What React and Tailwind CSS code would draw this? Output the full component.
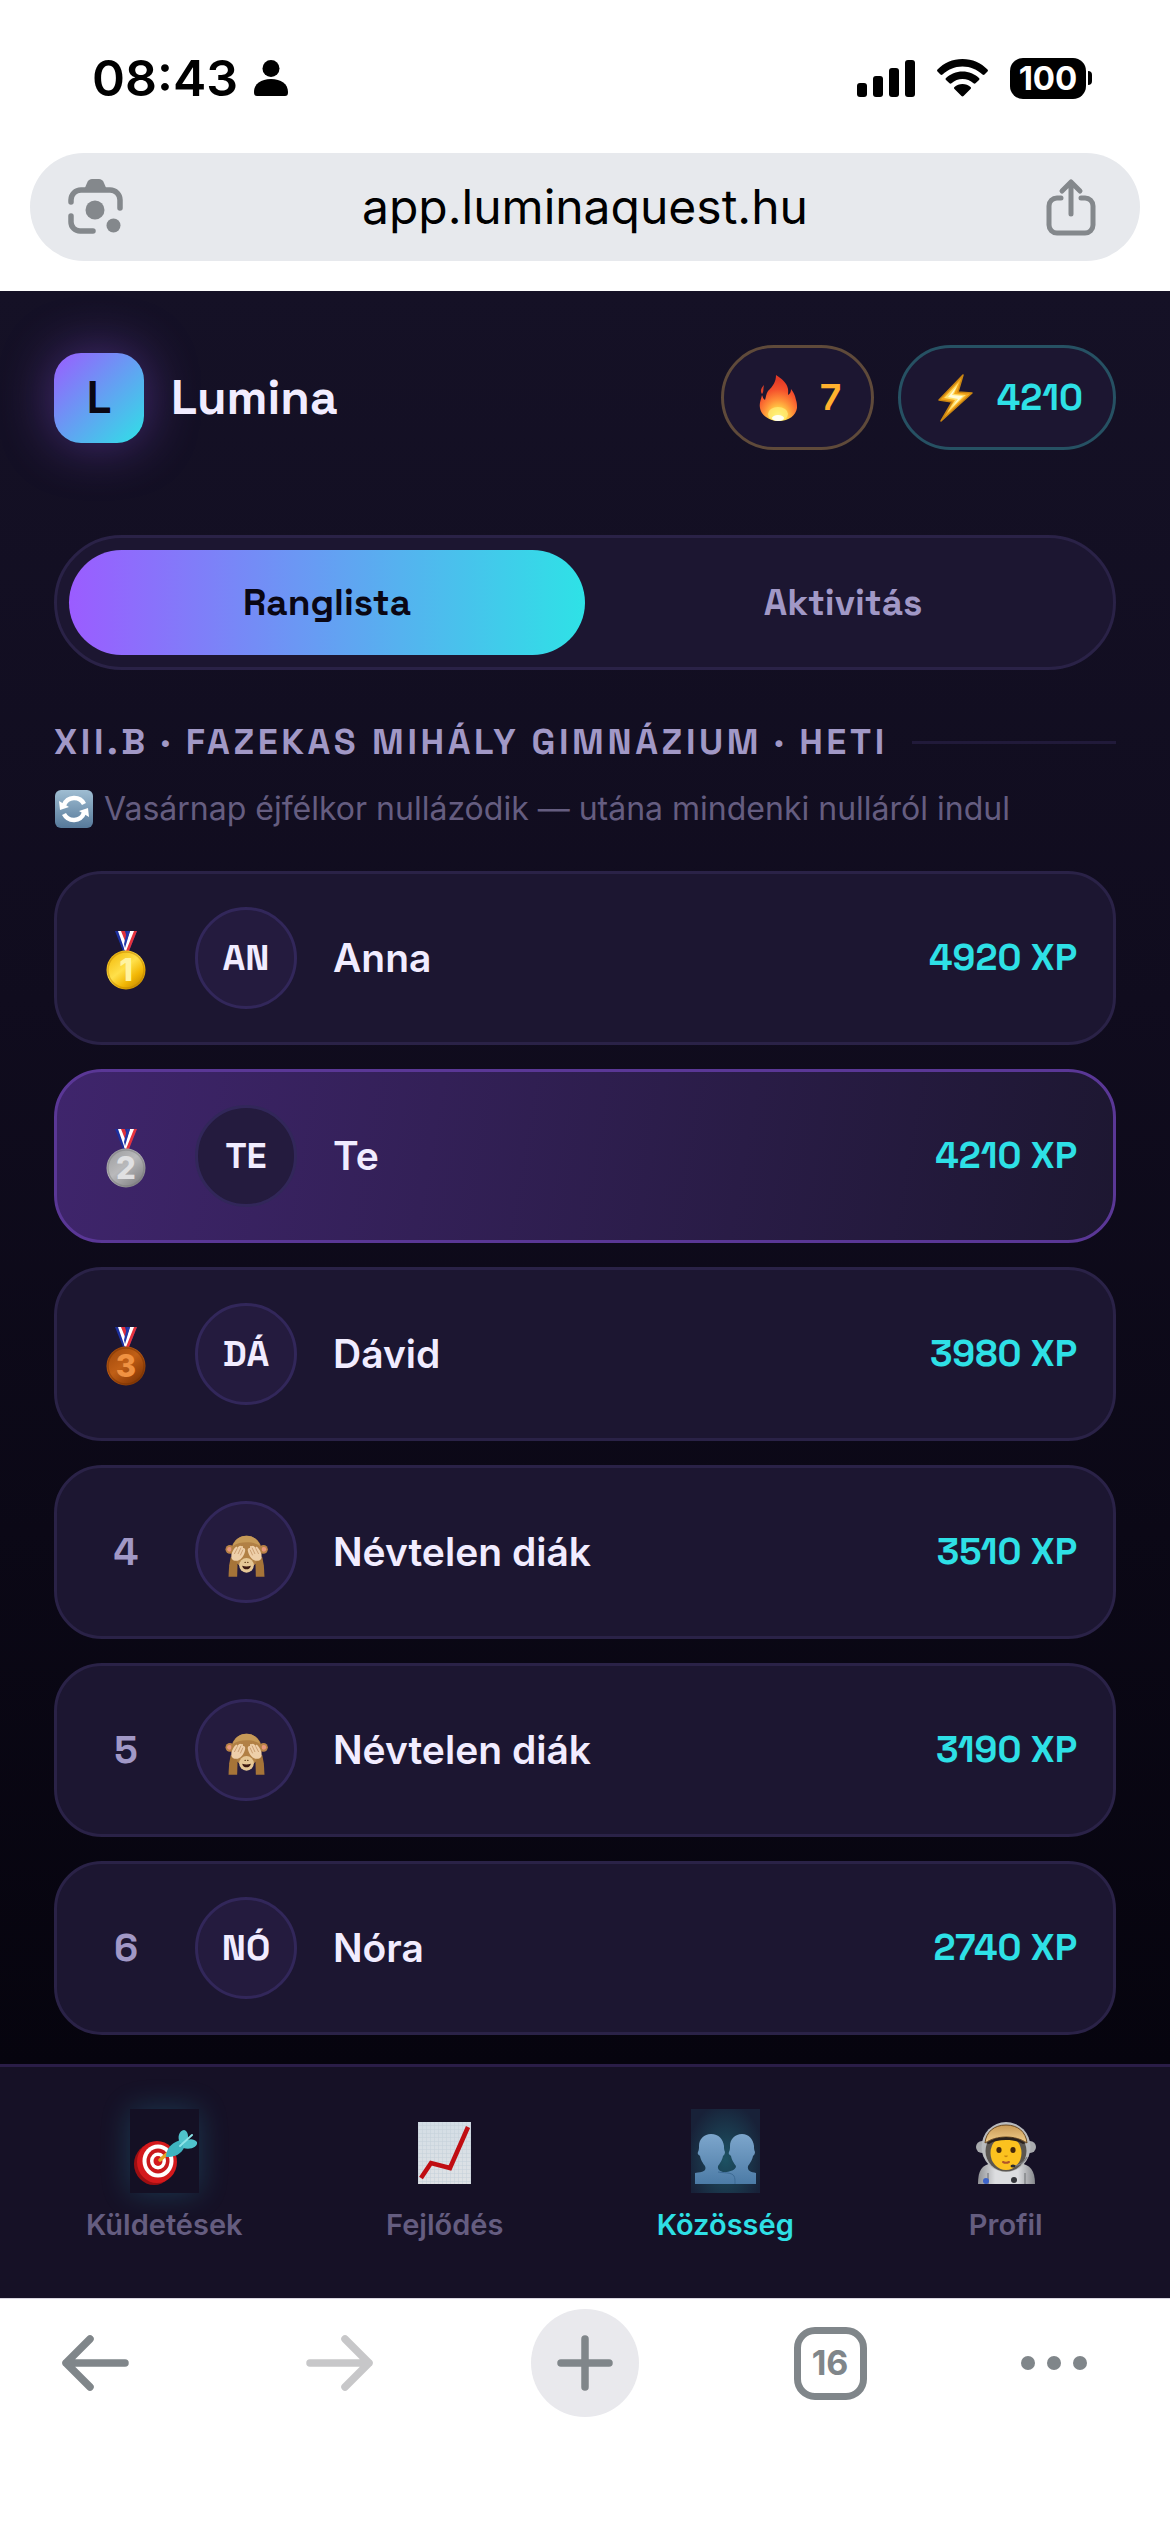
import React from 'react';
import { clsx } from 'clsx';

const players = [
  { rank: 1, initials: 'AN', name: 'Anna', xp: 4920 },
  { rank: 2, initials: 'TE', name: 'Te', xp: 4210, me: true },
  { rank: 3, initials: 'DÁ', name: 'Dávid', xp: 3980 },
  { rank: 4, name: 'Névtelen diák', xp: 3510 },
  { rank: 5, name: 'Névtelen diák', xp: 3190 },
  { rank: 6, initials: 'NÓ', name: 'Nóra', xp: 2740 },
];

const medals = {
  1: { light: '#ffe04a', mid: '#f2b705', dark: '#b97f00', digit: '#fff3a0' },
  2: { light: '#b9b9bb', mid: '#9c9c9e', dark: '#77777a', digit: '#e0e0e2' },
  3: { light: '#c05f16', mid: '#a0480b', dark: '#743003', digit: '#f09242' },
};

function Flame() {
  return (
    <svg width="48" height="48" viewBox="0 0 48 48" aria-hidden="true">
      <defs>
        <radialGradient id="flame" cx="0.5" cy="0.95" r="0.85">
          <stop offset="0" stopColor="#fffbd0" />
          <stop offset="0.2" stopColor="#ffe14a" />
          <stop offset="0.48" stopColor="#ff9038" />
          <stop offset="0.75" stopColor="#f5512c" />
          <stop offset="1" stopColor="#e33a26" />
        </radialGradient>
      </defs>
      <path d="M22 1c6 4 11 8 12 14 .4 3 0 5 0 6 2-1 3-3 3-6 3 4 4 6 5 11 1 3 1 5 1 8-1 7-8 13-18 13S7 41 6 34c-1-5 1-8 2-13 1 2 1 4 3 5 1-3 1-6 3-9 5-5 8-9 8-16z" fill="url(#flame)" />
      <path d="M10 11c-3 3-4 6-2 9 2-2 1-5 2-9z" fill="#d9412a" />
      <ellipse cx="24" cy="40" rx="10" ry="7" fill="#ffef7a" opacity="0.7" />
      <ellipse cx="24" cy="44" rx="6" ry="3" fill="#fffef0" />
    </svg>
  );
}

function Bolt() {
  return (
    <svg width="48" height="48" viewBox="0 0 48 48" aria-hidden="true">
      <path d="M32 1 8 26l13 2L10 47l31-28-14-1z" fill="#f3a51b" stroke="#c98512" strokeWidth="1.5" strokeLinejoin="round" />
      <path d="M28 8 13 24l11 2-8 13 19-18-12-1z" fill="#ffe06a" />
      <path d="m26 12-9 11 10 2-6 8 11-11-11-1z" fill="#fffbd8" />
    </svg>
  );
}

function Medal({ rank }) {
  const c = medals[rank];
  return (
    <svg width="40" height="64" viewBox="0 -4 40 64" role="img" aria-label={rank + '. hely'}>
      <defs>
        <linearGradient id={'medal' + rank} x1="0.1" y1="0" x2="0.9" y2="1">
          <stop offset="0" stopColor={c.mid} />
          <stop offset="0.45" stopColor={c.light} />
          <stop offset="0.7" stopColor={c.mid} />
          <stop offset="1" stopColor={c.dark} />
        </linearGradient>
      </defs>
      <path d="M9 1h22l-8 20h-6z" fill="#1c2f9e" />
      <path d="M12 1h5l5 16-2 4h-1z" fill="#fff" />
      <path d="M15 1h4l3 11-1 4z" fill="#e0303a" />
      <path d="M31 1h-5l-7 20h4z" fill="#e5333d" />
      <path d="M28 1h-4l-6 18 2 2z" fill="#fff" />
      <path d="M24 1h-3l-3 13 1 4z" fill="#2438a8" />
      <circle cx="20" cy="40" r="19.5" fill={'url(#medal' + rank + ')'} />
      <circle cx="20" cy="40" r="18" fill="none" stroke={c.dark} strokeOpacity="0.45" strokeWidth="1.5" />
      <text x="20" y="51" textAnchor="middle" fontSize="31" fontWeight="800" fontFamily="Inter, sans-serif" fill={c.digit}>
        {rank}
      </text>
    </svg>
  );
}

function Monkey() {
  return (
    <svg width="43" height="50" viewBox="27 -9 128 150" role="img" aria-label="Névtelen">
      <circle cx="41" cy="58" r="13" fill="#b98246" />
      <circle cx="142" cy="58" r="13" fill="#b98246" />
      <circle cx="40" cy="58" r="7" fill="#e8967c" />
      <circle cx="143" cy="58" r="7" fill="#e8967c" />
      <ellipse cx="91" cy="64" rx="46" ry="47" fill="#b18045" />
      <path d="M50 48c6-22 24-31 41-31s35 9 41 31c-12-8-26-11-41-11s-29 3-41 11z" fill="#c69a58" />
      <ellipse cx="91" cy="106" rx="22" ry="22" fill="#e6c795" />
      <path d="M44 80c12 6 20 14 20 26l-1 34H37l2-34z" fill="#a67438" />
      <path d="M138 80c-12 6-20 14-20 26l1 34h26l-2-34z" fill="#a67438" />
      <path d="M46 84c-2-10 4-24 12-32 4-3 6-1 5 3 4-7 10-10 12-6 5-3 7 1 5 5 5-1 8 3 7 8-2 12-10 26-22 30-8 2-17-1-19-8z" fill="#eecfa9" />
      <path d="M136 84c2-10-4-24-12-32-4-3-6-1-5 3-4-7-10-10-12-6-5-3-7 1-5 5-5-1-8 3-7 8 2 12 10 26 22 30 8 2 17-1 19-8z" fill="#eecfa9" />
      <g stroke="#c39468" strokeWidth="2.5" fill="none" strokeLinecap="round">
        <path d="m63 56-8 15M74 54l-8 17M80 60l-7 15" />
        <path d="m119 56 8 15M108 54l8 17M102 60l7 15" />
      </g>
      <ellipse cx="87" cy="97" rx="2.5" ry="2" fill="#5c3716" />
      <ellipse cx="95" cy="97" rx="2.5" ry="2" fill="#5c3716" />
      <path d="M78 107c8 3 18 3 26 0-1 7-7 11-13 11s-12-4-13-11z" fill="#3c1810" />
    </svg>
  );
}

function Refresh() {
  return (
    <svg width="40" height="40" viewBox="0 0 40 40" className="shrink-0" aria-hidden="true">
      <defs>
        <linearGradient id="refresh" x1="0" y1="0" x2="0" y2="1">
          <stop offset="0" stopColor="#9fbdd2" />
          <stop offset="1" stopColor="#56799a" />
        </linearGradient>
      </defs>
      <rect x="1" y="1" width="38" height="38" rx="6" fill="url(#refresh)" />
      <path d="M10 16a11 11 0 0 1 20-1M30 24a11 11 0 0 1-20 1" fill="none" stroke="#fff" strokeWidth="4.5" />
      <path d="M5 12l1 9 9-3zM35 28l-1-9-9 3z" fill="#fff" />
    </svg>
  );
}

function Target() {
  return (
    <svg width="69" height="84" viewBox="0 0 69 84" aria-hidden="true">
      <ellipse cx="24" cy="55" rx="20" ry="21" fill="#9e0f12" />
      <ellipse cx="27" cy="53" rx="20" ry="21" fill="#d4191c" />
      <ellipse cx="28" cy="52" rx="15.5" ry="16.5" fill="#fff" />
      <ellipse cx="28" cy="52" rx="11.5" ry="12.5" fill="#c9181b" />
      <ellipse cx="28" cy="52" rx="8" ry="8.5" fill="#fff" />
      <ellipse cx="28" cy="52" rx="4.5" ry="5" fill="#d4191c" />
      <path d="m30 51 9-8" stroke="#e5a323" strokeWidth="3.5" strokeLinecap="round" />
      <path d="M36 48c0-10 8-16 16-17l3 4c-1 8-9 14-19 13z" fill="#3fb3bf" />
      <path d="M50 34c-3-6-1-12 4-13 4 1 5 6 3 13zM53 36c4-7 10-7 14-3 1 5-6 8-14 6z" fill="#4fc3cc" />
      <path d="m50 37 12-11" stroke="#8ce4e8" strokeWidth="2" strokeLinecap="round" />
    </svg>
  );
}

function Chart() {
  return (
    <svg width="69" height="84" viewBox="0 0 69 84" aria-hidden="true">
      <defs>
        <linearGradient id="paper" x1="0" y1="0" x2="0" y2="1">
          <stop offset="0" stopColor="#d3dde5" />
          <stop offset="1" stopColor="#dfe2e5" />
        </linearGradient>
        <pattern id="grid" width="4" height="4" patternUnits="userSpaceOnUse">
          <path d="M0 0H4M0 0V4" stroke="#c4d0d9" strokeWidth="1" />
        </pattern>
      </defs>
      <rect x="8" y="13" width="53" height="62" fill="url(#paper)" />
      <rect x="8" y="13" width="53" height="62" fill="url(#grid)" />
      <path d="m11 69 10-15 19 5 18-41" fill="none" stroke="#c00d12" strokeWidth="4.5" />
    </svg>
  );
}

function People() {
  return (
    <svg width="69" height="84" viewBox="0 0 69 84" aria-hidden="true">
      <defs>
        <linearGradient id="people" x1="0" y1="0" x2="0" y2="1">
          <stop offset="0" stopColor="#7da6cc" />
          <stop offset="1" stopColor="#4c7ba6" />
        </linearGradient>
      </defs>
      <path d="M51 25c7 0 11 5 12 12 0 2 0 4 1 6 0 2-1 3-2 4-1 5-3 7-5 10-1 5 3 6 8 7v11H27V64c10-1 18-2 18-7-2-3-4-5-5-10-1-1-3-2-2-4 1-2 1-4 1-6 0-7 5-12 12-12z" fill="url(#people)" />
      <path d="M20 25c8 0 12 5 13 12 0 2 0 4 1 6 0 2-1 3-2 4-1 5-3 7-5 10-1 5 4 6 11 7 4 1 5 4 5 11H4V64c8-1 12-2 10-7-2-3-4-5-5-10-1-1-3-2-2-4 1-2 1-4 1-6 0-7 5-12 12-12z" fill="url(#people)" />
      <path d="M27 63c4 1 14 0 16 4 1 2 1 4 1 8" fill="none" stroke="#3d6a94" strokeWidth="1" />
    </svg>
  );
}

function Astronaut() {
  return (
    <svg width="69" height="84" viewBox="0 0 69 84" aria-hidden="true">
      <defs>
        <linearGradient id="suit" x1="0" y1="0" x2="1" y2="0">
          <stop offset="0" stopColor="#8f9194" />
          <stop offset="0.3" stopColor="#dcdde0" />
          <stop offset="0.7" stopColor="#dcdde0" />
          <stop offset="1" stopColor="#86888c" />
        </linearGradient>
        <linearGradient id="visor" x1="0" y1="0" x2="0" y2="1">
          <stop offset="0" stopColor="#c99a55" />
          <stop offset="1" stopColor="#f0cd8c" />
        </linearGradient>
      </defs>
      <path d="M7 75c0-14 4-19 14-21h28c10 2 15 7 15 21z" fill="url(#suit)" />
      <path d="M17 75V64M54 75V64" stroke="#85878b" strokeWidth="1.5" />
      <circle cx="11" cy="38" r="6" fill="#a9abae" />
      <circle cx="59" cy="38" r="6" fill="#a9abae" />
      <ellipse cx="35" cy="38" rx="24.5" ry="25" fill="#b9bbbd" />
      <ellipse cx="35" cy="42" rx="20.5" ry="20.5" fill="#5b5650" />
      <ellipse cx="35" cy="44" rx="15.5" ry="17" fill="#fcc21f" />
      <path d="M14 34c1-11 9-18 21-18s20 7 21 18c-6-4-13-6-21-6s-15 2-21 6z" fill="url(#visor)" stroke="#6d4b22" strokeWidth="1" />
      <path d="M15 34c6-4 13-6 20-6s14 2 20 6l-3 1c-5-3-10-4-17-4s-12 1-17 4z" fill="#2a211d" />
      <ellipse cx="28" cy="41" rx="2.6" ry="3" fill="#45290c" />
      <ellipse cx="42" cy="41" rx="2.6" ry="3" fill="#45290c" />
      <path d="M34 47c1 1 1 1 2 0" stroke="#c9860f" strokeWidth="1.5" fill="none" strokeLinecap="round" />
      <path d="M32 53c2 1 4 1 6 0" stroke="#b0562a" strokeWidth="2" fill="none" strokeLinecap="round" />
      <path d="M56 48c-3 6-7 8-13 9" stroke="#7c7d81" strokeWidth="1.5" fill="none" />
      <ellipse cx="42" cy="57" rx="2.5" ry="1.5" fill="#2c2c30" />
      <circle cx="43" cy="71" r="3" fill="#34353a" />
      <circle cx="15" cy="72" r="3" fill="#3c63c9" />
    </svg>
  );
}

function StatusBar() {
  return (
    <div className="flex h-[60px] items-center justify-between pr-[78px] pl-[92px]">
      <div className="flex items-center gap-4">
        <span className="text-[50px] leading-[60px] font-semibold">08:43</span>
        <svg width="34" height="36" viewBox="0 0 34 36" aria-hidden="true">
          <circle cx="17" cy="8.5" r="8.5" />
          <path d="M0 32c0-8 7-13 17-13s17 5 17 13c0 3-1 4-3 4H3c-2 0-3-1-3-4z" />
        </svg>
      </div>
      <div className="flex items-center gap-[22px]">
        <svg width="58" height="38" viewBox="0 0 58 38" aria-hidden="true">
          <rect x="0" y="24" width="10" height="14" rx="3" />
          <rect x="16" y="17" width="10" height="21" rx="3" />
          <rect x="32" y="9" width="10" height="29" rx="3" />
          <rect x="48" y="1" width="10" height="37" rx="3" />
        </svg>
        <svg width="51" height="38" viewBox="0 0 51 38" aria-hidden="true">
          <path d="M25.5 0C35.5 0 44 4 50.5 10.5c.6.6.6 1.4 0 2l-3 3c-.6.6-1.3.6-2 0C40 10.5 33.5 7.5 25.5 7.5S11 10.5 5.5 15.5c-.7.6-1.4.6-2 0l-3-3c-.6-.6-.6-1.4 0-2C7 4 15.5 0 25.5 0z" />
          <path d="M25.5 12.5c6.5 0 12 2.5 16.5 6.5.6.6.6 1.4 0 2l-3.5 3.3c-.6.6-1.3.6-2 0-3-2.8-7-4.3-11-4.3s-8 1.5-11 4.3c-.7.6-1.4.6-2 0L9 21c-.6-.6-.6-1.4 0-2 4.5-4 10-6.5 16.5-6.5z" />
          <path d="M25.5 25c3 0 6 1.2 8 3 .7.6.7 1.3 0 2l-7 7c-.6.6-1.4.6-2 0l-7-7c-.7-.7-.7-1.4 0-2 2-1.8 5-3 8-3z" />
        </svg>
        <div className="flex items-center gap-0.5">
          <span className="flex h-[41px] w-[76px] items-center justify-center rounded-[13px] bg-black text-[33px] leading-none font-bold text-white">
            100
          </span>
          <span className="h-3.5 w-1 rounded-r-full bg-black" />
        </div>
      </div>
    </div>
  );
}

function AddressBar() {
  return (
    <div className="mx-[30px] mt-[45px] flex h-[108px] items-center justify-between rounded-full bg-[#e7e9ed] pr-[44px] pl-[38px] text-[#84888c]">
      <button type="button" aria-label="Lens">
        <svg width="56" height="58" viewBox="0 0 56 58" fill="none" stroke="currentColor" strokeWidth="5.5" strokeLinecap="round">
          <path d="M3 24v-2a10 10 0 0 1 10-10h29a10 10 0 0 1 10 10v8" />
          <path d="M3 38v6a9 9 0 0 0 9 9h13" />
          <path d="M16 12l3-7c1-3 3-4 5-4h7c2 0 4 1 5 4l3 7z" fill="currentColor" stroke="none" />
          <circle cx="27" cy="32" r="9.5" fill="currentColor" stroke="none" />
          <circle cx="45.5" cy="47.5" r="7" fill="currentColor" stroke="none" />
        </svg>
      </button>
      <input
        type="text"
        aria-label="Cím"
        defaultValue="app.luminaquest.hu"
        className="min-w-0 flex-1 bg-transparent text-center text-[48px] leading-[60px] text-black outline-none"
      />
      <button type="button" aria-label="Megosztás">
        <svg width="50" height="58" viewBox="0 0 50 58" fill="none" stroke="currentColor" strokeWidth="5" strokeLinecap="round" strokeLinejoin="round">
          <path d="M15 20h-4a8 8 0 0 0-8 8v19a8 8 0 0 0 8 8h28a8 8 0 0 0 8-8V28a8 8 0 0 0-8-8h-4" />
          <path d="M25 36V4M16 13l9-9 9 9" />
        </svg>
      </button>
    </div>
  );
}

function AppHeader() {
  return (
    <header className="flex items-center justify-between">
      <div className="flex items-center gap-[27px]">
        <div className="flex size-[90px] items-center justify-center rounded-[27px] bg-linear-135/srgb from-[#9b5cff] to-[#2ee2e6] text-[45px] leading-none font-bold text-[#0a0714] shadow-[0_0_54px_rgba(155,92,255,0.4)]">
          L
        </div>
        <h1 className="text-[48px] leading-[60px] font-bold text-[#f1ecff]">Lumina</h1>
      </div>
      <div className="flex gap-6 text-[37px] leading-[48px] font-bold">
        <div className="flex h-[105px] items-center gap-[18px] rounded-full border-3 border-[#5f4a3a] bg-[#1c1631] px-[30px] text-[#ffb12e]">
          <Flame />
          <span>7</span>
        </div>
        <div className="flex h-[105px] items-center gap-[18px] rounded-full border-3 border-[#265163] bg-[#1c1631] px-[30px] text-[#2ee0e6]">
          <Bolt />
          <span>4210</span>
        </div>
      </div>
    </header>
  );
}

function PlayerRow({ player }) {
  return (
    <li
      className={clsx(
        'flex h-[174px] items-center gap-9 rounded-[48px] border-3 px-9',
        player.me
          ? 'border-[#5a3796] bg-linear-100/srgb from-[#3f256c] to-[#1d1731]'
          : 'border-[#2a2247] bg-[#1c1631]'
      )}
    >
      <span className="flex w-[66px] justify-center text-[39px] leading-[48px] font-bold text-[#a198c6]">
        {player.rank <= 3 ? <Medal rank={player.rank} /> : player.rank}
      </span>
      <span className="flex size-[102px] items-center justify-center rounded-full border-3 border-[#32275a] bg-[#241b3e] text-[36px] leading-[48px] font-bold text-[#f1ecff]">
        {player.initials || <Monkey />}
      </span>
      <span className="flex-1 font-['Inter',sans-serif] text-[39px] leading-[48px] font-semibold text-[#f1ecff]">
        {player.name}
      </span>
      <span className="text-[37px] leading-[48px] font-bold text-[#2ee0e6]">{player.xp} XP</span>
    </li>
  );
}

function BottomNav() {
  const item = 'flex flex-col items-center gap-3 text-[29px] leading-10 font-semibold';
  return (
    <nav className="grid grid-cols-4 border-t-3 border-[#2a1d47] bg-[#161126] px-6 pt-[42px] pb-[53px] font-['Inter',sans-serif]">
      <a href="#kuldetesek" className={clsx(item, 'text-[#655d80]')}>
        <span className="bg-[#141024] shadow-[0_0_30px_rgba(46,200,230,0.22)]">
          <Target />
        </span>
        Küldetések
      </a>
      <a href="#fejlodes" className={clsx(item, 'text-[#655d80]')}>
        <Chart />
        Fejlődés
      </a>
      <a href="#kozosseg" aria-current="page" className={clsx(item, 'text-[#2ee0e6]')}>
        <span className="bg-radial-[at_50%_60%] from-[#1d5263] to-[#182138] to-80%">
          <People />
        </span>
        Közösség
      </a>
      <a href="#profil" className={clsx(item, 'text-[#655d80]')}>
        <Astronaut />
        Profil
      </a>
    </nav>
  );
}

function BrowserToolbar() {
  const button = 'flex h-[108px] w-[108px] items-center justify-center';
  return (
    <div className="flex justify-between border-t border-[#d9d6e0] bg-white pt-2.5 pr-[83px] pb-[115px] pl-[41px] text-[#80868a]">
      <button type="button" aria-label="Vissza" className={button}>
        <svg width="68" height="56" viewBox="0 0 68 56" fill="none" stroke="currentColor" strokeWidth="7.5" strokeLinecap="round" strokeLinejoin="round">
          <path d="M64 28H5M29 4 5 28l24 24" />
        </svg>
      </button>
      <button type="button" aria-label="Előre" className={clsx(button, 'text-[#c7c7c9]')}>
        <svg width="68" height="56" viewBox="0 0 68 56" fill="none" stroke="currentColor" strokeWidth="7.5" strokeLinecap="round" strokeLinejoin="round">
          <path d="M4 28h59M39 4l24 24-24 24" />
        </svg>
      </button>
      <button type="button" aria-label="Új lap" className={clsx(button, 'rounded-full bg-[#e9e9ed]')}>
        <svg width="56" height="56" viewBox="0 0 56 56" fill="none" stroke="currentColor" strokeWidth="7.5" strokeLinecap="round">
          <path d="M28 4v48M4 28h48" />
        </svg>
      </button>
      <button type="button" aria-label="Lapok" className={button}>
        <span className="flex size-[73px] items-center justify-center rounded-[21px] border-7 border-[#80868a] text-[34px] leading-none font-bold">
          16
        </span>
      </button>
      <button type="button" aria-label="Továbbiak" className="flex h-[108px] w-[66px] items-center justify-between">
        <span className="size-3.5 rounded-full bg-[#80868a]" />
        <span className="size-3.5 rounded-full bg-[#80868a]" />
        <span className="size-3.5 rounded-full bg-[#80868a]" />
      </button>
    </div>
  );
}

export default function App() {
  return (
    <div className="flex min-h-screen flex-col bg-white font-['Inter',sans-serif] text-black">
      <div className="pt-12 pb-[30px]">
        <StatusBar />
        <AddressBar />
      </div>

      <main className="flex-1 bg-linear-to-b/srgb from-[#151126] via-[#100c1e] via-40% to-[#06040e] px-[54px] pt-[54px] pb-[29px] font-['Space_Grotesk','Inter',sans-serif]">
        <AppHeader />

        <div role="tablist" className="mt-[85px] flex rounded-full border-3 border-[#2a2247] bg-[#1c1631] p-3 text-[37px] leading-[48px]">
          <button type="button" role="tab" aria-selected="true" className="h-[105px] flex-1 rounded-full bg-linear-to-r/srgb from-[#9b5cff] to-[#2ee2e6] font-semibold text-[#0a0714]">
            Ranglista
          </button>
          <button type="button" role="tab" aria-selected="false" className="h-[105px] flex-1 rounded-full font-semibold text-[#a198c6]">
            Aktivitás
          </button>
        </div>

        <h2 className="mt-[48px] flex items-center gap-6 text-[36px] leading-[48px] font-semibold tracking-widest text-[#a198c6] uppercase">
          XII.B · Fazekas Mihály Gimnázium · heti
          <span className="h-[3px] flex-1 bg-[#211a3a]" />
        </h2>

        <p className="mt-[19px] flex items-center gap-2.5 font-['Inter',sans-serif] text-[32px] leading-[48px] text-[#655d80]">
          <Refresh />
          Vasárnap éjfélkor nullázódik — utána mindenki nulláról indul
        </p>

        <ol className="mt-[38px] flex flex-col gap-6">
          {players.map((player) => (
            <PlayerRow key={player.rank} player={player} />
          ))}
        </ol>
      </main>

      <BottomNav />
      <BrowserToolbar />
    </div>
  );
}
